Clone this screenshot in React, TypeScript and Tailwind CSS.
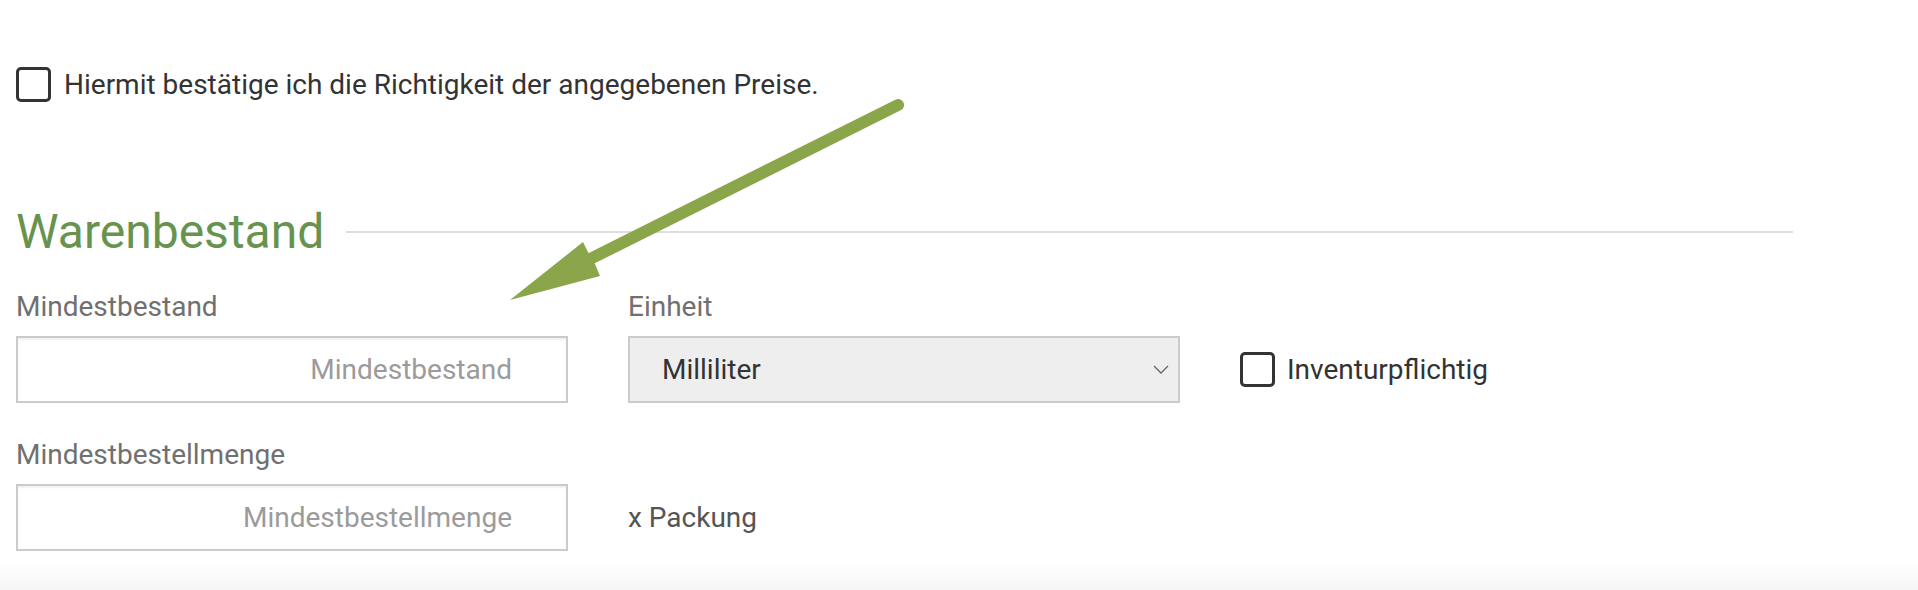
import React from "react";

function Box() {
  return <span className="block h-[35px] w-[35px] shrink-0 rounded-[5px] border-[3px] border-[#333]" />;
}

function Chevron() {
  return (
    <svg width="16" height="9" viewBox="0 0 16 9" fill="none" className="shrink-0">
      <path d="M1 1l7 7 7-7" stroke="#666" strokeWidth="1.3" />
    </svg>
  );
}

export default function App() {
  return (
    <div className="relative h-[590px] w-full overflow-hidden bg-white font-['Roboto',sans-serif]">
      <div className="pl-4 pt-[67px]">
        {/* price confirmation */}
        <label className="flex items-center gap-[13px]">
          <Box />
          <span className="text-[28px] leading-[35px] text-[#333]">Hiermit bestätige ich die Richtigkeit der angegebenen Preise.</span>
        </label>

        {/* section title */}
        <div className="mt-[105px] flex w-[1777px] items-center gap-[22px]">
          <h2 className="shrink-0 text-[48px] leading-[50px] text-[#67934f]">Warenbestand</h2>
          <div className="h-[2px] flex-1 bg-[#dedede]" />
        </div>

        <div className="mt-[32px] flex gap-[60px]">
          <div className="w-[552px]">
            <div className="text-[28px] leading-[36px] text-[#707070]">Mindestbestand</div>
            <input
              placeholder="Mindestbestand"
              className="mt-[11px] h-[67px] w-full border-2 border-[#cbcbcb] pr-[54px] text-right text-[28px] shadow-[inset_0_2px_2px_rgba(0,0,0,0.06)] outline-none placeholder:text-[#9b9b9b]"
            />
          </div>
          <div className="w-[552px]">
            <div className="text-[28px] leading-[36px] text-[#707070]">Einheit</div>
            <div className="mt-[11px] flex h-[67px] items-center justify-between border-2 border-[#cbcbcb] bg-[#eeeeee] pl-[32px] pr-[9px]">
              <span className="text-[28px] text-[#333]">Milliliter</span>
              <Chevron />
            </div>
          </div>
          <label className="mt-[47px] flex h-[67px] items-center gap-[12px]">
            <Box />
            <span className="text-[28px] text-[#333]">Inventurpflichtig</span>
          </label>
        </div>

        <div className="mt-[34px] flex gap-[60px]">
          <div className="w-[552px]">
            <div className="text-[28px] leading-[36px] text-[#707070]">Mindestbestellmenge</div>
            <input
              placeholder="Mindestbestellmenge"
              className="mt-[11px] h-[67px] w-full border-2 border-[#cbcbcb] pr-[54px] text-right text-[28px] shadow-[inset_0_2px_2px_rgba(0,0,0,0.06)] outline-none placeholder:text-[#9b9b9b]"
            />
          </div>
          <div className="mt-[47px] flex h-[67px] items-center text-[28px] text-[#555]">x Packung</div>
        </div>
      </div>

      <div className="mt-[12px] h-[40px] bg-gradient-to-b from-white to-[#f1f1f1]" />

      {/* green annotation arrow */}
      <svg className="pointer-events-none absolute left-0 top-0" width="1918" height="590">
        <line x1="898" y1="105" x2="592" y2="258" stroke="#8ba64a" strokeWidth="12" strokeLinecap="round" />
        <polygon points="510,300 583,242 589,254 595,264 600,276" fill="#8ba64a" />
      </svg>
    </div>
  );
}
